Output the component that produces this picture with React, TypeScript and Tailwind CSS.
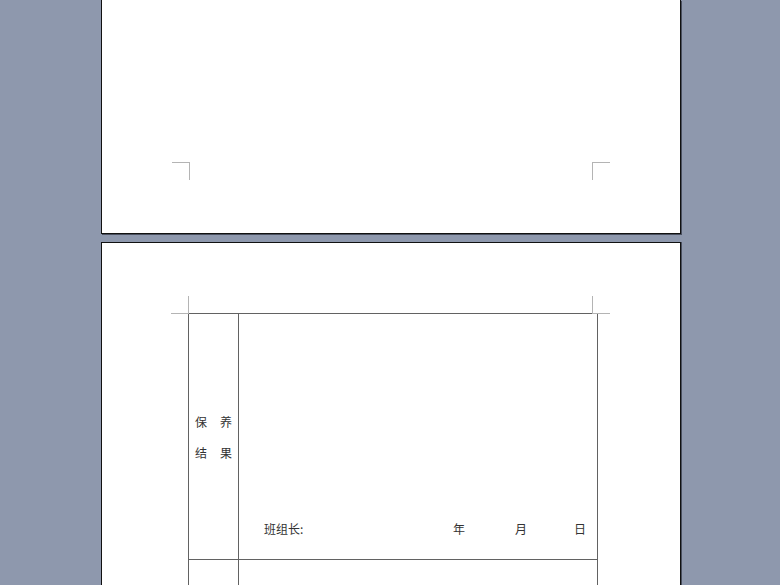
import React from 'react';

// Crop mark in the corner of the text area (Word-style print layout)
const CropMark: React.FC<{ className: string; side: 'left' | 'right'; edge: 'top' | 'bottom' }> = ({ className, side, edge }) => (
  <div className={`absolute w-[18px] h-[18px] ${className}`}>
    <div
      className={`absolute h-px w-[18px] bg-[#b4b4b4] ${edge === 'top' ? 'top-0' : 'bottom-0'} left-0`}
    />
    <div
      className={`absolute w-px h-[18px] bg-[#b4b4b4] top-0 ${side === 'left' ? 'right-0' : 'left-0'}`}
    />
  </div>
);

const cjk = "font-['Noto_Sans_CJK_SC','Liberation_Sans',sans-serif]";

export default function App() {
  return (
    <div className="w-[780px] h-[585px] overflow-hidden bg-[#8e98ad] flex flex-col">
      {/* page 1, only its lower part is visible */}
      <div className="relative ml-[101px] w-[580px] h-[234px] shrink-0 bg-white border-x border-b border-[#111] shadow-[1px_1px_0_#4a5060]">
        <CropMark className="left-[70px] top-[162px]" side="left" edge="top" />
        <CropMark className="left-[490px] top-[162px]" side="right" edge="top" />
      </div>

      {/* page 2 */}
      <div className="relative ml-[101px] mt-[8px] w-[580px] h-[400px] shrink-0 bg-white border-x border-t border-[#111] shadow-[1px_0_0_#4a5060]">
        <CropMark className="left-[69px] top-[53px]" side="left" edge="bottom" />
        <CropMark className="left-[490px] top-[53px]" side="right" edge="bottom" />

        <div className={`ml-[86px] mt-[70px] w-[410px] border-l border-t border-r border-[#626262] ${cjk} text-[12px] text-[#333]`}>
          <div className="flex h-[246px] border-b border-[#626262]">
            <div className="w-[50px] shrink-0 border-r border-[#626262] flex flex-col justify-center px-[6px]">
              <div className="flex justify-between leading-[31px]">
                <span>保</span>
                <span>养</span>
              </div>
              <div className="flex justify-between leading-[31px]">
                <span>结</span>
                <span>果</span>
              </div>
            </div>
            <div className="flex-1 flex items-end pb-[21px] pl-[25px]">
              <span className="w-[189px]">班组长:</span>
              <span className="w-[62px]">年</span>
              <span className="w-[59px]">月</span>
              <span>日</span>
            </div>
          </div>
          <div className="flex h-[40px]">
            <div className="w-[50px] shrink-0 border-r border-[#626262]" />
            <div className="flex-1" />
          </div>
        </div>
      </div>
    </div>
  );
}
